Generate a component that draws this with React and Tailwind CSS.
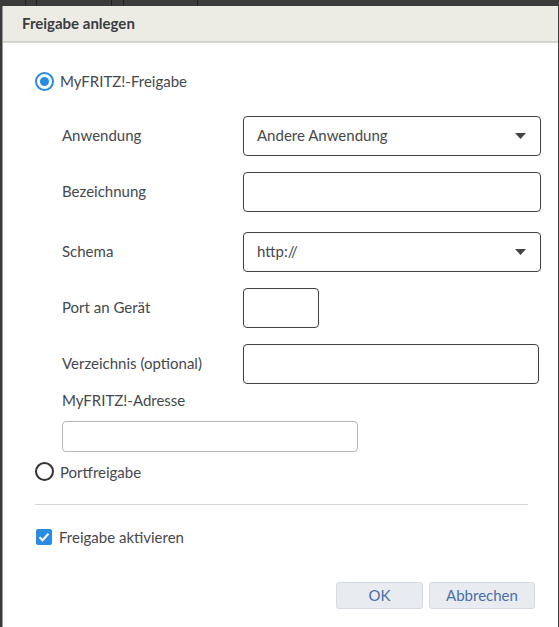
import React from "react";

function Radio({ checked }) {
  return (
    <span className="flex h-[19px] w-[19px] shrink-0 items-center justify-center rounded-full border-2 border-[#333] data-[on=true]:border-[#2a8ce0]" data-on={checked}>
      {checked && <span className="h-[9px] w-[9px] rounded-full bg-[#2a8ce0]" />}
    </span>
  );
}

function Caret() {
  return (
    <svg width="11" height="6" viewBox="0 0 11 6" className="shrink-0">
      <path d="M0 0h11L5.5 6z" fill="#444" />
    </svg>
  );
}

function FieldRow({ label, children }) {
  return (
    <div className="flex h-[40px] items-center">
      <span className="w-[181px] shrink-0">{label}</span>
      {children}
    </div>
  );
}

export default function App() {
  return (
    <div className="h-[627px] w-[559px] overflow-hidden bg-[#3b3b3b] text-[15px] text-[#45484d]" style={{ fontFamily: "Lato, 'Open Sans', sans-serif" }}>
      {/* background window edges behind the dialog */}
      <div className="flex h-[6px]">
        <span className="ml-[25px] w-px bg-[#222]" />
        <span className="ml-[10px] w-px bg-[#222]" />
        <span className="ml-[74px] w-px bg-[#222]" />
        <span className="ml-[11px] w-px bg-[#222]" />
        <span className="ml-[73px] w-px bg-[#222]" />
      </div>
      <div className="ml-[2px] mr-px flex h-[621px] flex-col border-l border-[#9a9a9a] bg-white">
        <div className="flex h-[37px] shrink-0 items-center border-b-2 border-[#d4d4d0] bg-[#ecebe4] pl-[19px] font-bold text-[#3a3d42]">
          Freigabe anlegen
        </div>

        <div className="flex flex-col pl-[32px] pr-[17px]">
          <label className="mt-[27px] flex items-center gap-[6px]">
            <Radio checked />
            MyFRITZ!-Freigabe
          </label>

          <div className="mt-[23px] flex flex-col gap-[16px] pl-[27px]">
            <FieldRow label="Anwendung">
              <div className="flex h-[40px] w-[298px] items-center justify-between rounded-[4px] border border-[#3f4247] pl-[13px] pr-[14px]">
                <span>Andere Anwendung</span>
                <Caret />
              </div>
            </FieldRow>
            <FieldRow label="Bezeichnung">
              <div className="h-[40px] w-[298px] rounded-[4px] border border-[#3f4247]" />
            </FieldRow>
            <div className="mt-[4px]">
              <FieldRow label="Schema">
                <div className="flex h-[40px] w-[298px] items-center justify-between rounded-[4px] border border-[#3f4247] pl-[13px] pr-[14px]">
                  <span>http://</span>
                  <Caret />
                </div>
              </FieldRow>
            </div>
            <FieldRow label="Port an Gerät">
              <div className="h-[40px] w-[76px] rounded-[4px] border border-[#3f4247]" />
            </FieldRow>
            <FieldRow label="Verzeichnis (optional)">
              <div className="h-[40px] w-[296px] rounded-[4px] border border-[#3f4247]" />
            </FieldRow>
          </div>

          <div className="pl-[27px]">
            <div className="mt-[5px] leading-[22px]">MyFRITZ!-Adresse</div>
            <div className="mt-[10px] h-[31px] w-[296px] rounded-[4px] border border-[#b4b6b9]" />
          </div>

          <label className="mt-[9px] flex items-center gap-[6px]">
            <Radio checked={false} />
            Portfreigabe
          </label>

          <div className="mt-[21px] h-px w-[493px] bg-[#d6d6d6]" />

          <label className="mt-[21px] flex items-center gap-[7px] pl-[1px]">
            <span className="flex h-[16px] w-[16px] items-center justify-center rounded-[2px] bg-[#2a8ce0]">
              <svg width="12" height="10" viewBox="0 0 12 10">
                <path d="M1.5 5.2l3 3L10.5 1.8" fill="none" stroke="#fff" strokeWidth="2" />
              </svg>
            </span>
            Freigabe aktivieren
          </label>

          <div className="mt-[33px] flex justify-end gap-[6px] pr-[6px]">
            <button className="h-[27px] w-[87px] rounded-[3px] border border-[#d5dbe0] bg-[#e8ecf0] text-[#4a6ea6]">OK</button>
            <button className="h-[27px] w-[106px] rounded-[3px] border border-[#d5dbe0] bg-[#e8ecf0] text-[#4a6ea6]">Abbrechen</button>
          </div>
        </div>
      </div>
    </div>
  );
}
